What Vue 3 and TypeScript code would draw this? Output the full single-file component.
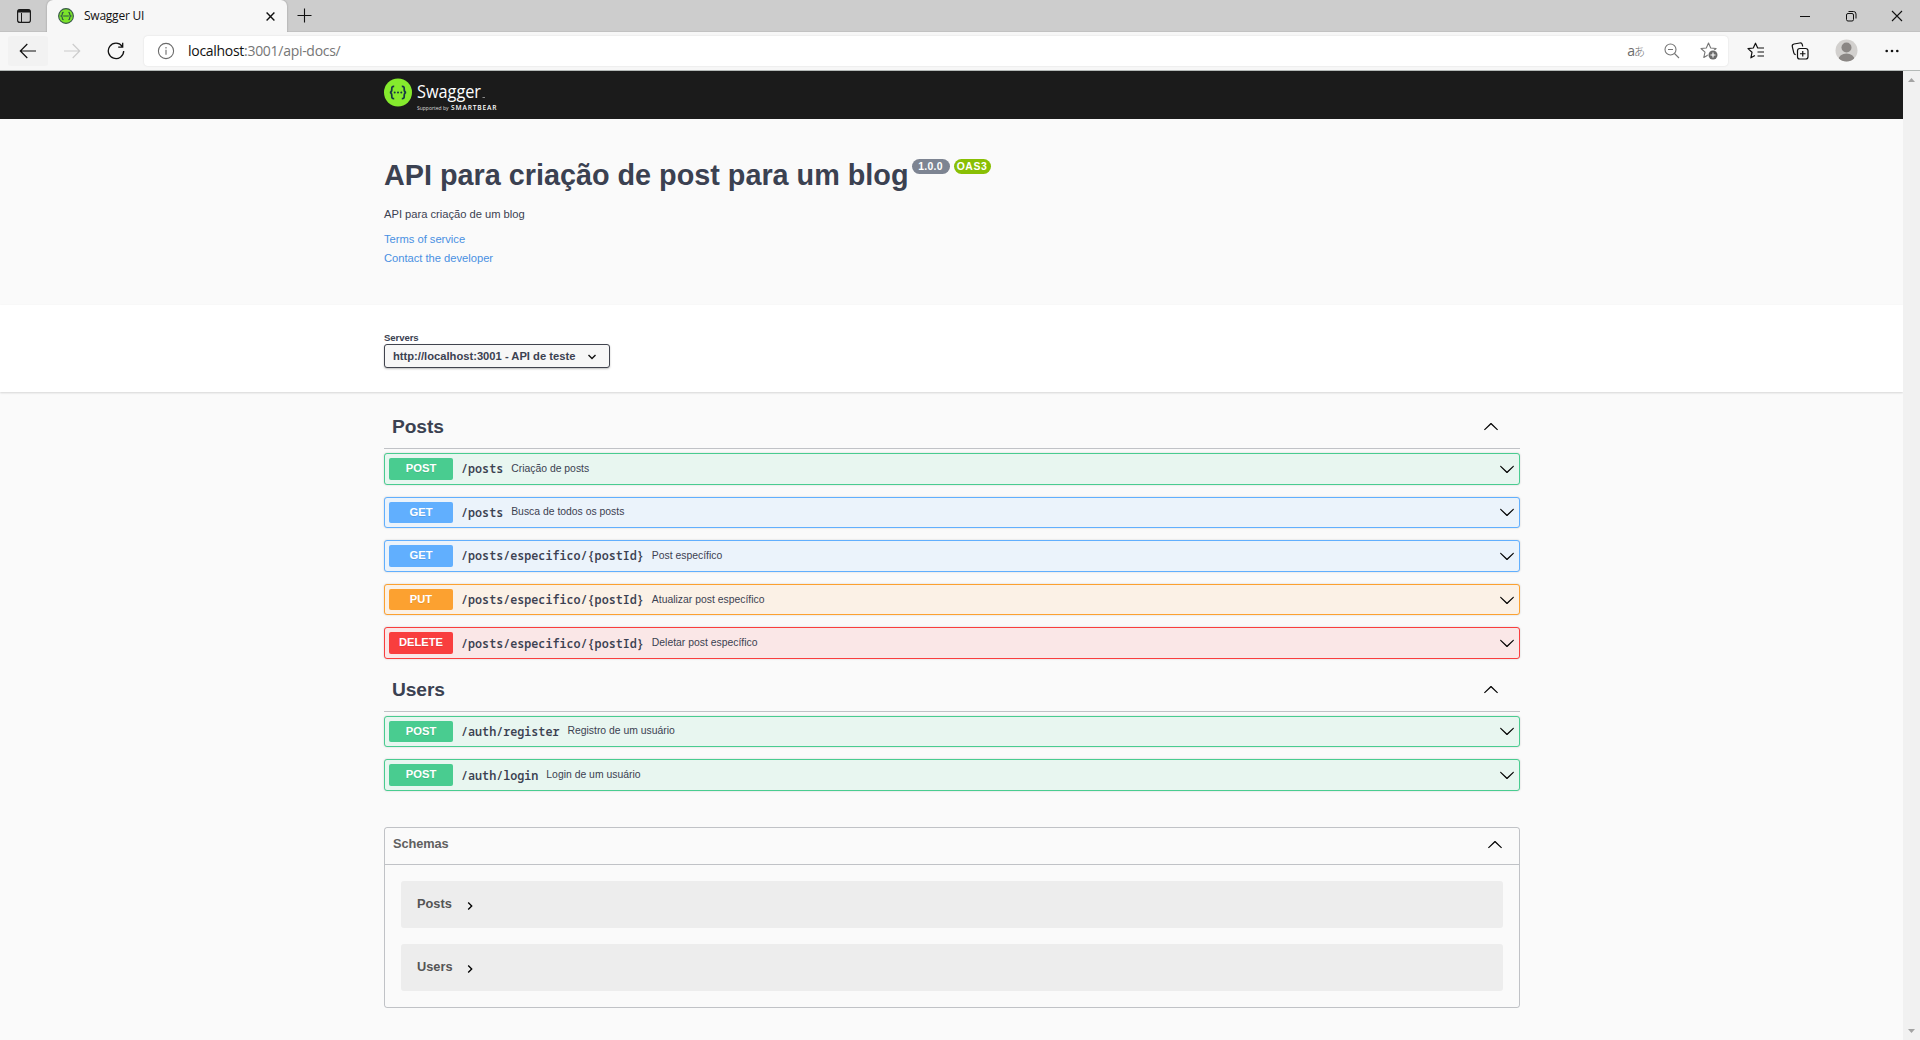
<script setup lang="ts">
interface Operation {
  method: 'post' | 'get' | 'put' | 'delete'
  path: string
  summary: string
}

interface Tag {
  name: string
  operations: Operation[]
}

const tags: Tag[] = [
  {
    name: 'Posts',
    operations: [
      { method: 'post', path: '/posts', summary: 'Criação de posts' },
      { method: 'get', path: '/posts', summary: 'Busca de todos os posts' },
      { method: 'get', path: '/posts/especifico/{postId}', summary: 'Post específico' },
      { method: 'put', path: '/posts/especifico/{postId}', summary: 'Atualizar post específico' },
      { method: 'delete', path: '/posts/especifico/{postId}', summary: 'Deletar post específico' },
    ],
  },
  {
    name: 'Users',
    operations: [
      { method: 'post', path: '/auth/register', summary: 'Registro de um usuário' },
      { method: 'post', path: '/auth/login', summary: 'Login de um usuário' },
    ],
  },
]

const schemas: string[] = ['Posts', 'Users']

const arrowPath =
  'M17.418 6.109c.272-.268.709-.268.979 0s.271.701 0 .969l-7.908 7.83c-.27.268-.707.268-.979 0l-7.908-7.83c-.27-.268-.27-.701 0-.969.271-.268.709-.268.979 0L10 13.25l7.418-7.141z'
</script>

<template>
  <div class="window">
    <div class="tabstrip">
      <svg class="tab-actions" width="14" height="14" viewBox="0 0 14 14" fill="none" stroke="#1b1b1b">
        <rect x=".6" y=".6" width="12.8" height="12.8" rx="2.2" stroke-width="1.2" />
        <path d="M1 2.6h12M1 1.6h12" stroke-width="1.6" />
        <path d="M4.5 4v9.5" stroke-width="1" />
      </svg>
      <div class="tab">
        <svg width="16" height="16" viewBox="0 0 16 16">
          <circle cx="8" cy="8" r="7.4" fill="#7be32a" stroke="#39584b" stroke-width="1.1" />
          <path d="M5.6 4.3c-1.2 0-1.3.6-1.3 1.5 0 1.2 0 1.9-1 2.2 1 .3 1 1 1 2.2 0 .9.1 1.5 1.3 1.5M10.4 4.3c1.2 0 1.3.6 1.3 1.5 0 1.2 0 1.9 1 2.2-1 .3-1 1-1 2.2 0 .9-.1 1.5-1.3 1.5M5.2 8h5.6" fill="none" stroke="#2c5147" stroke-width="1.2" />
        </svg>
        <span class="tab-title">Swagger UI</span>
        <svg class="tab-close" width="9" height="9" viewBox="0 0 9 9" stroke="#111" stroke-width="1.4"><path d="M.6.6l7.8 7.8M8.4.6L.6 8.4" /></svg>
      </div>
      <svg class="tab-new" width="15" height="15" viewBox="0 0 15 15" stroke="#111" stroke-width="1.1"><path d="M7.5.5v14M.5 7.5h14" /></svg>
      <div class="win-buttons">
        <svg width="12" height="12" viewBox="0 0 12 12" stroke="#111"><path d="M1 6.5h10" /></svg>
        <svg width="12" height="12" viewBox="0 0 12 12" fill="none" stroke="#111">
          <rect x="1.5" y="3.5" width="7" height="7.5" rx="1.5" />
          <path d="M3.5 1.5h5q2.5 0 2.5 2.5v4.5" />
        </svg>
        <svg width="12" height="12" viewBox="0 0 12 12" stroke="#111" stroke-width="1.1"><path d="M1 1l10 10M11 1L1 11" /></svg>
      </div>
    </div>

    <div class="toolbar">
      <div class="back">
        <svg width="18" height="16" viewBox="0 0 18 16" fill="none" stroke="#111" stroke-width="1.2"><path d="M17 8H1.5M8.3 1L1.3 8l7 7" /></svg>
      </div>
      <svg class="forward" width="18" height="16" viewBox="0 0 18 16" fill="none" stroke="#ccc" stroke-width="1.2"><path d="M1 8h15.5M9.7 1l7 7-7 7" /></svg>
      <svg class="reload" width="18" height="18" viewBox="0 0 18 18" fill="none" stroke="#111" stroke-width="1.3"><path d="M15.2 4.3A7.7 7.7 0 1 0 16.7 9M15.7.8v4.4h-4.5" /></svg>
      <div class="address">
        <svg width="18" height="18" viewBox="0 0 18 18" fill="none" stroke="#6b6b6b" stroke-width="1.1">
          <circle cx="9" cy="9" r="7.6" />
          <path d="M9 7.8v5M9 5v1.5" />
        </svg>
        <span class="url">localhost<span class="url-rest">:3001/api-docs/</span></span>
        <span class="translate">a<span class="kana">あ</span></span>
        <svg class="zoom-out" width="16" height="16" viewBox="0 0 16 16" fill="none" stroke="#767676" stroke-width="1.1">
          <circle cx="6.5" cy="6.5" r="5.5" /><path d="M10.5 10.5l4.5 4.5M4 6.5h5" />
        </svg>
        <svg class="star-add" width="18" height="18" viewBox="0 0 18 18">
          <path d="M8.5 1l2.2 5 5.4.5-4.1 3.6L13 15.5l-4.5-2.8-4.7 2.8 1.2-5.4L1 6.5 6.3 6z" fill="none" stroke="#767676" stroke-width="1.1" stroke-linejoin="round" />
          <circle cx="13" cy="13" r="5.3" fill="#fff" /><circle cx="13" cy="13" r="4.5" fill="#6b6b6b" />
          <path d="M13 10.5v5M10.5 13h5" stroke="#fff" stroke-width="1.1" />
        </svg>
      </div>
      <svg class="favorites" width="18" height="18" viewBox="0 0 18 18" fill="none" stroke="#111" stroke-width="1.2" stroke-linejoin="round">
        <path d="M12.5 6H10.7L8.5 1.2 6.3 6 1 6.6l4 3.7-1.1 5.5 4-2.4M10.7 6h6.3M10.5 10h6.5M10.5 14h6.5" />
      </svg>
      <svg class="collections" width="18" height="18" viewBox="0 0 18 18" fill="none" stroke="#111" stroke-width="1.2">
        <rect x="6.5" y="6.5" width="10.5" height="10.5" rx="2.3" />
        <path d="M11.75 9v5.5M9 11.75h5.5M4.7 12.7C3.5 12.4 3 11.8 2.8 10.8L1.3 4.6C1 3.2 1.6 2.3 3 2L8.8 1c1.3-.2 2.2.4 2.5 1.6l.4 1.9" />
      </svg>
      <svg class="avatar" width="23" height="23" viewBox="0 0 23 23">
        <defs><clipPath id="avatar-clip"><circle cx="11.5" cy="11.5" r="11" /></clipPath></defs>
        <circle cx="11.5" cy="11.5" r="11" fill="#d2d0ce" />
        <circle cx="11.5" cy="8.5" r="5" fill="#8a8684" />
        <ellipse cx="11.5" cy="20.5" rx="8" ry="6" fill="#8a8684" clip-path="url(#avatar-clip)" />
      </svg>
      <svg class="menu" width="14" height="4" viewBox="0 0 14 4" fill="#111"><circle cx="1.7" cy="2" r="1.3" /><circle cx="7" cy="2" r="1.3" /><circle cx="12.3" cy="2" r="1.3" /></svg>
    </div>

    <div class="viewport">
      <div class="page">
        <header class="topbar">
          <div class="wrapper">
            <svg class="logo" width="114" height="34" viewBox="0 0 114 34">
              <circle cx="14" cy="14.5" r="14" fill="#85ea2d" />
              <g fill="none" stroke="#173647" stroke-width="1.7">
                <path d="M10.2 8.4C8 8.3 7.7 9.2 7.8 11c.1 2 .1 3.2-1.9 3.5 2 .3 2 1.5 1.9 3.5-.1 1.8.2 2.7 2.4 2.6" />
                <path d="M17.8 8.4c2.2-.1 2.5.8 2.4 2.6-.1 2-.1 3.2 1.9 3.5-2 .3-2 1.5-1.9 3.5.1 1.8-.2 2.7-2.4 2.6" />
              </g>
              <g fill="#173647"><circle cx="10.7" cy="14.5" r="1" /><circle cx="14" cy="14.5" r="1" /><circle cx="17.3" cy="14.5" r="1" /></g>
              <text class="logo-name" x="33" y="20" textLength="64" lengthAdjust="spacingAndGlyphs">Swagger</text>
              <rect x="98.5" y="19" width="2.5" height="1" fill="#888" />
              <text class="logo-by" x="33" y="32" textLength="31.5" lengthAdjust="spacingAndGlyphs">Supported by</text>
              <text class="logo-brand" x="67" y="32" textLength="45.5">SMARTBEAR</text>
            </svg>
          </div>
        </header>

        <section class="info">
          <div class="wrapper">
            <div class="title-row">
              <h1>API para criação de post para um blog</h1>
              <span class="badge version">1.0.0</span>
              <span class="badge oas">OAS3</span>
            </div>
            <p class="description">API para criação de um blog</p>
            <a class="link">Terms of service</a>
            <a class="link">Contact the developer</a>
          </div>
        </section>

        <section class="servers">
          <div class="wrapper">
            <label>Servers</label>
            <div class="select">
              <span>http://localhost:3001 - API de teste</span>
              <svg width="10" height="6" viewBox="0 0 10 6" fill="none" stroke="#111" stroke-width="1.4"><path d="M1.5 1L5 4.4 8.5 1" /></svg>
            </div>
          </div>
        </section>

        <main class="wrapper">
          <section v-for="tag in tags" :key="tag.name" class="tag">
            <h3 class="tag-header">
              <span>{{ tag.name }}</span>
              <svg class="arrow up" viewBox="0 0 20 20"><path :d="arrowPath" /></svg>
            </h3>
            <div class="operations">
              <div v-for="op in tag.operations" :key="op.method + op.path" class="operation" :class="op.method">
                <span class="method">{{ op.method.toUpperCase() }}</span>
                <span class="path">{{ op.path }}</span>
                <span class="summary">{{ op.summary }}</span>
                <svg class="arrow" viewBox="0 0 20 20"><path :d="arrowPath" /></svg>
              </div>
            </div>
          </section>

          <section class="schemas">
            <h4>
              <span>Schemas</span>
              <svg class="arrow up" viewBox="0 0 20 20"><path :d="arrowPath" /></svg>
            </h4>
            <div class="models">
              <div v-for="schema in schemas" :key="schema" class="model">
                <span>{{ schema }}</span>
                <svg width="16" height="16" viewBox="0 0 24 24"><path d="M10 6L8.59 7.41 13.17 12l-4.58 4.59L10 18l6-6z" /></svg>
              </div>
            </div>
          </section>
        </main>
      </div>
      <div class="scrollbar">
        <svg width="7" height="4" viewBox="0 0 7 4" fill="#a3a3a3"><path d="M0 4L3.5 0 7 4z" /></svg>
        <svg width="7" height="4" viewBox="0 0 7 4" fill="#a3a3a3"><path d="M0 0l3.5 4L7 0z" /></svg>
      </div>
    </div>
  </div>
</template>

<style>
body {
  margin: 0;
  background: #fafafa;
}
</style>

<style scoped>
* {
  box-sizing: border-box;
}
svg {
  display: block;
  flex: none;
}
h1,
h3,
h4,
p {
  margin: 0;
}
.window {
  display: flex;
  flex-direction: column;
  width: 1920px;
  height: 1040px;
  overflow: hidden;
  font-family: 'Liberation Sans', Arial, sans-serif;
  color: #3b4151;
}

/* Browser chrome */
.tabstrip {
  display: flex;
  height: 32px;
  background: #cdcdcd;
  box-shadow: inset 0 -1px 0 #c2c2c2;
}
.tab-actions {
  margin: 9px 16px 0 17px;
}
.tab {
  display: flex;
  align-items: center;
  width: 240px;
  height: 32px;
  padding: 0 12px 0 11px;
  border-radius: 6px 6px 0 0;
  background: #f7f7f7;
  box-shadow: 0 0 2px rgba(0, 0, 0, 0.3);
  clip-path: inset(0 -3px 0 -3px);
}
.tab-title {
  margin-left: 10px;
  font: 12px/16px 'Open Sans', 'Noto Sans', sans-serif;
  letter-spacing: -0.24px;
  color: #111;
}
.tab-close {
  margin-left: auto;
}
.tab-new {
  margin: 8px 0 0 10px;
}
.win-buttons {
  display: flex;
  gap: 34px;
  margin: 10px 17px 0 auto;
}
.toolbar {
  display: flex;
  align-items: center;
  height: 39px;
  padding-bottom: 1px;
  border-bottom: 1px solid #b4b9b7;
  background: #f7f7f7;
}
.back {
  display: flex;
  align-items: center;
  justify-content: center;
  width: 40px;
  height: 30px;
  margin-left: 8px;
  border-radius: 3px;
  background: #f2f2f2;
}
.forward {
  margin-left: 15px;
}
.reload {
  margin-left: 26px;
}
.address {
  display: flex;
  align-items: center;
  width: 1584px;
  height: 30px;
  margin-left: 19px;
  padding: 0 10px 0 13px;
  border-radius: 4px;
  background: #fff;
  box-shadow: 0 0 2px rgba(0, 0, 0, 0.12);
}
.url {
  margin-left: 13px;
  font: 14px/20px 'Open Sans', 'Noto Sans', sans-serif;
  letter-spacing: -0.29px;
  color: #111;
}
.url-rest {
  color: #767676;
}
.translate {
  display: flex;
  align-items: baseline;
  margin-left: auto;
  font: 14px/16px 'Open Sans', 'Noto Sans', sans-serif;
  color: #6b6b6b;
}
.kana {
  font: 300 11px/16px 'Noto Sans CJK JP', sans-serif;
  margin-left: -1px;
}
.zoom-out {
  margin-left: 19px;
}
.star-add {
  margin-left: 20px;
}
.favorites {
  margin-left: 19px;
}
.collections {
  margin-left: 26px;
}
.avatar {
  margin-left: 26px;
}
.menu {
  margin-left: 27px;
}

/* Page */
.viewport {
  display: flex;
  flex: 1;
  min-height: 0;
}
.page {
  width: 1903px;
  overflow: hidden;
  background: #fafafa;
}
.scrollbar {
  display: flex;
  flex-direction: column;
  justify-content: space-between;
  align-items: center;
  width: 17px;
  padding: 7px 0 7px;
  background: #f1f1f1;
}
.wrapper {
  width: 1136px;
  margin-left: 384px;
}
.topbar {
  height: 48px;
  padding-top: 7px;
  background: #1b1b1b;
}
.logo {
  overflow: visible;
}
.logo text {
  font-family: 'Open Sans', 'Noto Sans', sans-serif;
  fill: #fff;
}
.logo .logo-name {
  font-size: 17.3px;
}
.logo .logo-by {
  font-size: 5.4px;
  fill: #ddd;
}
.logo .logo-brand {
  font-size: 6.6px;
  font-weight: 600;
}

.info {
  height: 186px;
  padding-top: 40px;
}
.title-row {
  display: flex;
  align-items: flex-start;
}
h1 {
  margin-right: 3px;
  font-size: 28.8px;
  line-height: 32px;
  letter-spacing: -0.01px;
  white-space: nowrap;
}
.badge {
  display: flex;
  align-items: center;
  justify-content: center;
  height: 15px;
  border-radius: 8px;
  font-size: 10.4px;
  font-weight: 700;
  color: #fff;
}
.version {
  width: 38px;
  background: #7d8492;
  letter-spacing: 0.3px;
}
.oas {
  width: 37px;
  margin-left: 4px;
  background: #89bf04;
  letter-spacing: 0.6px;
}
.description {
  margin-top: 15px;
  font-size: 11.2px;
  line-height: 16px;
  letter-spacing: -0.02px;
}
.link {
  display: block;
  margin-top: 9px;
  font-size: 11.2px;
  line-height: 16px;
  letter-spacing: -0.02px;
  color: #4990e2;
}
.link + .link {
  margin-top: 3px;
}

.servers {
  height: 87px;
  padding-top: 27px;
  background: #fff;
  box-shadow: 0 1px 2px rgba(0, 0, 0, 0.15);
}
.servers label {
  display: block;
  font-size: 9.6px;
  font-weight: 700;
  line-height: 12px;
  letter-spacing: -0.1px;
}
.select {
  display: flex;
  align-items: center;
  justify-content: space-between;
  width: 226px;
  height: 24px;
  padding: 0 12px 0 8px;
  border: 1px solid #41444e;
  border-radius: 3px;
  background: #f7f7f7;
  box-shadow: 0 1px 2px rgba(0, 0, 0, 0.25);
  font-size: 11.2px;
  font-weight: 700;
  line-height: 16px;
}
.select svg {
  margin-top: 2px;
}

.tag-header {
  display: flex;
  align-items: flex-end;
  justify-content: space-between;
  height: 52.7px;
  padding: 0 21px 9px 8px;
  border-bottom: 1px solid rgba(59, 65, 81, 0.3);
  font-size: 19.2px;
  line-height: 24px;
  letter-spacing: -0.1px;
}
.tag:first-child .tag-header {
  height: 57px;
}
.tag-header .arrow {
  margin-bottom: 4px;
}
.operations {
  display: flex;
  flex-direction: column;
  gap: 12px;
  padding-top: 4px;
}
.operation {
  display: flex;
  align-items: center;
  height: 31.6px;
  padding: 4px;
  border: 1px solid;
  border-radius: 3px;
  box-shadow: 0 0 2px rgba(0, 0, 0, 0.19);
}
.method {
  width: 64px;
  height: 21.6px;
  border-radius: 2px;
  font-size: 11.2px;
  font-weight: 700;
  line-height: 21.6px;
  text-align: center;
  text-shadow: 0 1px 0 rgba(0, 0, 0, 0.1);
  color: #fff;
}
.path {
  margin: 0 8px 1px;
  font-family: 'Noto Sans Mono', 'DejaVu Sans Mono', monospace;
  font-size: 11.73px;
  font-weight: 600;
  line-height: 16px;
}
.summary {
  flex: 1;
  font-size: 10.4px;
  line-height: 14px;
}
.arrow {
  width: 16px;
  height: 16px;
}
.arrow.up {
  transform: rotate(180deg);
}
.post {
  border-color: #49cc90;
  background: #e8f6f0;
}
.post .method {
  background: #49cc90;
}
.get {
  border-color: #61affe;
  background: #ebf3fb;
}
.get .method {
  background: #61affe;
}
.put {
  border-color: #fca130;
  background: #fbf1e6;
}
.put .method {
  background: #fca130;
}
.delete {
  border-color: #f93e3e;
  background: #fae7e7;
}
.delete .method {
  background: #f93e3e;
}

.schemas {
  margin-top: 36.1px;
  border: 1px solid rgba(59, 65, 81, 0.3);
  border-radius: 3px;
}
h4 {
  display: flex;
  justify-content: space-between;
  height: 37px;
  padding: 8px 16px 0 8px;
  border-bottom: 1px solid rgba(59, 65, 81, 0.3);
  font-size: 12.8px;
  line-height: 16px;
  letter-spacing: -0.1px;
  color: #606060;
}
h4 .arrow {
  margin-top: 1px;
}
.models {
  display: flex;
  flex-direction: column;
  gap: 16px;
  padding: 16px;
}
.model {
  display: flex;
  align-items: center;
  height: 47px;
  padding-left: 16px;
  border-radius: 3px;
  background: #ededed;
  font-size: 12.8px;
  font-weight: 700;
  line-height: 16px;
  color: #555;
}
.model span {
  width: 45px;
}
.model svg {
  margin-top: 3px;
}
</style>
